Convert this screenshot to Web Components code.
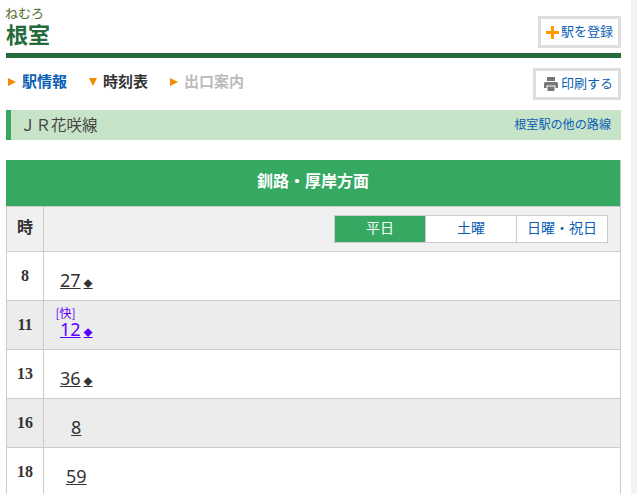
<!DOCTYPE html>
<html lang="ja">
<head>
<meta charset="utf-8">
<title>根室</title>
<style>
html, body { margin: 0; height: 494px; overflow: hidden; background: #fff; }
body { font-family: "Noto Sans CJK JP", "Liberation Sans", sans-serif; display: flex; }
</style>
</head>
<body>
<station-page>
	<station-header slot="head" kana="ねむろ" name="根室"></station-header>
	<station-nav slot="head"></station-nav>
	<line-band slot="head" line="ＪＲ花咲線" other="根室駅の他の路線"></line-band>
	<time-table title="釧路・厚岸方面">
		<time-row hour="8" min="27" mark="◆" pad="16"></time-row>
		<time-row hour="11" min="12" mark="◆" pad="16" kind="[快]" alt></time-row>
		<time-row hour="13" min="36" mark="◆" pad="16"></time-row>
		<time-row hour="16" min="8" pad="27" alt></time-row>
		<time-row hour="18" min="59" pad="22"></time-row>
	</time-table>
</station-page>

<script>
	class BaseEl extends HTMLElement {
		render(html) {
			this.attachShadow({mode: 'open'}).innerHTML = html;
		}
	}

	class StationPage extends BaseEl {
		connectedCallback() {
			this.render(`<style>
				:host { display: flex; width: 637px; height: 494px; }
				.main { width: 615px; margin-left: 6px; flex: none; }
				.bar { width: 6px; margin-left: 10px; background: #f3f3f3; flex: none; }
			</style>
			<div class="main"><slot name="head"></slot><slot></slot></div>
			<div class="bar"></div>`);
		}
	}

	class StationHeader extends BaseEl {
		connectedCallback() {
			this.render(`<style>
				:host { display: block; height: 58px; border-bottom: 5px solid #266b3c; box-sizing: border-box; }
				.row { display: flex; justify-content: space-between; padding-top: 5px; }
				.kana { font-size: 13px; line-height: 16px; color: #4f6b2a; margin-left: -1px; }
				h1 { margin: 0; font-size: 22px; line-height: 25px; font-weight: 700; color: #266b3c; }
				reg-button { margin-top: 11px; }
			</style>
			<div class="row">
				<div><div class="kana">${this.getAttribute('kana')}</div><h1>${this.getAttribute('name')}</h1></div>
				<reg-button icon="plus">駅を登録</reg-button>
			</div>`);
		}
	}

	class RegButton extends BaseEl {
		connectedCallback() {
			const plus = '<svg width="13" height="13" viewBox="0 0 13 13"><path d="M5 0h3v5h5v3H8v5H5V8H0V5h5z" fill="#f90"/></svg>';
			const printer = '<svg width="14" height="14" viewBox="0 0 14 14"><path fill="#777" d="M3 0h8v4H3zM1.500 5h11A1.500 1.500 0 0 1 14 6.500V11h-2.500V8.500h-9V11H0V6.500A1.500 1.500 0 0 1 1.500 5zM3.500 9.500h7V14h-7z"/></svg>';
			const isPlus = this.getAttribute('icon') === 'plus';
			this.render(`<style>
				:host { display: inline-flex; align-items: center; gap: ${isPlus ? 2 : 3}px; box-sizing: border-box; height: 32px; padding: 0 5px 0 ${isPlus ? 5 : 8}px; border: 3px solid #ddd; background: #fff; font-size: 13px; color: #0b5fb5; }
				svg { display: block; }
				span { margin-top: -4px; }
			</style>${isPlus ? plus : printer}<span><slot></slot></span>`);
		}
	}

	class StationNav extends BaseEl {
		connectedCallback() {
			this.render(`<style>
				:host { display: flex; align-items: center; justify-content: space-between; height: 32px; margin-top: 10px; }
				ul { display: flex; list-style: none; margin: 0; padding: 0 0 8px 2px; font-size: 15px; font-weight: 700; }
				li { display: flex; align-items: center; margin-right: 22px; }
				i { width: 0; height: 0; margin: 4px 6px 0 0; border-style: solid; border-color: transparent; }
				.r { border-width: 4px 0 4px 8px; border-left-color: #f48a00; }
				.d { border-width: 8px 4px 0 4px; border-top-color: #f48a00; }
				.a { color: #0b5fb5; } .b { color: #333; } .c { color: #bbb; }
			</style>
			<ul>
				<li class="a"><i class="r"></i>駅情報</li>
				<li class="b"><i class="d"></i>時刻表</li>
				<li class="c"><i class="r"></i>出口案内</li>
			</ul>
			<reg-button icon="print">印刷する</reg-button>`);
		}
	}

	class LineBand extends BaseEl {
		connectedCallback() {
			this.render(`<style>
				:host { display: flex; align-items: center; justify-content: space-between; height: 30px; margin-top: 10px; padding: 0 10px 0 9px; border-left: 5px solid #35a962; background: #c8e4c8; box-sizing: border-box; }
				.name { font-size: 15.500px; color: #444; padding-bottom: 2px; }
				.other { font-size: 12.100px; color: #0b5fb5; padding-bottom: 3px; }
			</style>
			<span class="name">${this.getAttribute('line')}</span>
			<span class="other">${this.getAttribute('other')}</span>`);
		}
	}

	class TimeTable extends BaseEl {
		connectedCallback() {
			this.render(`<style>
				:host { display: block; margin-top: 20px; border-right: 1px solid #ccc; box-sizing: border-box; }
				.title { height: 47px; background: #35a962; color: #fff; font-size: 16px; font-weight: 700; display: flex; align-items: center; justify-content: center; box-sizing: border-box; border-bottom: 1px solid #ccc; padding-bottom: 7px; }
				.head { display: grid; grid-template-columns: 37px 1fr; height: 45px; background: #f0f0f0; box-sizing: border-box; border-bottom: 1px solid #ccc; border-left: 1px solid #ccc; }
				.h { display: flex; align-items: center; justify-content: center; padding-bottom: 7px; font-size: 16px; font-weight: 700; color: #333; border-right: 1px solid #ccc; }
				.tools { display: flex; justify-content: flex-end; align-items: center; padding-right: 12px; }
			</style>
			<div class="title">${this.getAttribute('title')}</div>
			<div class="head"><div class="h">時</div><div class="tools"><day-tabs></day-tabs></div></div>
			<slot></slot>`);
		}
	}

	class DayTabs extends BaseEl {
		connectedCallback() {
			this.render(`<style>
				:host { display: grid; grid-template-columns: 90px 91px 91px; width: 274px; height: 28px; box-sizing: border-box; border: 1px solid #ccc; background: #fff; font-size: 14px; color: #0b5fb5; }
				div { display: flex; align-items: center; justify-content: center; padding-bottom: 4px; box-sizing: border-box; }
				div + div { border-left: 1px solid #ccc; }
				.on { background: #35a962; color: #fff; }
			</style>
			<div class="on">平日</div><div>土曜</div><div>日曜・祝日</div>`);
		}
	}

	class TimeRow extends BaseEl {
		connectedCallback() {
			const alt = this.hasAttribute('alt');
			const kind = this.getAttribute('kind');
			const mark = this.getAttribute('mark');
			const color = kind ? '#5a00ff' : '#333';
			this.render(`<style>
				:host { display: grid; grid-template-columns: 37px 1fr; height: 49px; box-sizing: border-box; border-bottom: 1px solid #ccc; border-left: 1px solid #ccc; background: ${alt ? '#ececec' : '#fff'}; }
				.h { display: flex; align-items: center; justify-content: center; font: 700 16px "Liberation Serif", serif; color: #333; border-right: 1px solid #ccc; }
				.m { position: relative; padding: 16px 0 0 ${this.getAttribute('pad')}px; color: ${color}; line-height: 20px; white-space: nowrap; }
				.kind { position: absolute; left: 11.500px; top: 5px; font-size: 12px; line-height: 14px; }
				a { color: inherit; font: 18px "Noto Sans", sans-serif; text-decoration: underline; }
				.mk { font-size: 9px; margin-left: 3px; text-decoration: underline; font-family: "Noto Sans CJK JP", sans-serif; }
			</style>
			<div class="h">${this.getAttribute('hour')}</div>
			<div class="m">${kind ? `<span class="kind">${kind}</span>` : ''}<a href="#">${this.getAttribute('min')}</a>${mark ? `<span class="mk">${mark}</span>` : ''}</div>`);
		}
	}

	customElements.define('station-page', StationPage);
	customElements.define('station-header', StationHeader);
	customElements.define('reg-button', RegButton);
	customElements.define('station-nav', StationNav);
	customElements.define('line-band', LineBand);
	customElements.define('time-table', TimeTable);
	customElements.define('day-tabs', DayTabs);
	customElements.define('time-row', TimeRow);
</script>
</body>
</html>
